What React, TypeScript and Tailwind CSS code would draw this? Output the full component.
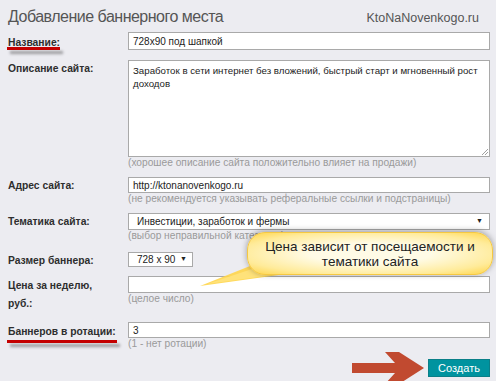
import React from "react";

const font = { fontFamily: '"Liberation Sans", Arial, sans-serif' };

function Label({ children, className = "" }: { children: React.ReactNode; className?: string }) {
  return (
    <div className={"relative w-[120px] shrink-0 text-[10.3px] font-bold text-[#2e2e2e] leading-[18px] " + className}>
      {children}
    </div>
  );
}

function Helper({ children, className = "" }: { children: React.ReactNode; className?: string }) {
  return <div className={"text-[10.2px] leading-[12px] text-[#9a9a9a] whitespace-nowrap " + className}>{children}</div>;
}

function Box({ children, h, className = "" }: { children?: React.ReactNode; h: string; className?: string }) {
  return (
    <div className={"w-full bg-white border border-[#a9a9a9] px-[4px] text-[10px] text-[#222] flex items-center " + h + " " + className}>
      {children}
    </div>
  );
}

function Underline({ className }: { className: string }) {
  return (
    <span
      className={
        "absolute left-[-1px] h-[3px] bg-[#c40000] shadow-[3px_4px_3px_rgba(0,0,0,0.35)] " + className
      }
    />
  );
}

export default function App() {
  return (
    <div className="relative w-[496px] h-[381px] overflow-hidden bg-[#ececf1]" style={font}>
      <div className="flex flex-col pl-[8px] pr-[6px]">
        {/* header */}
        <div className="h-[32px] flex items-start justify-between pt-[6px]">
          <div className="text-[16px] tracking-[-0.5px] text-[#555] leading-[22px]">Добавление баннерного места</div>
          <div className="text-[12.5px] text-[#555] leading-[16px] pt-[4px] pr-[11px]">KtoNaNovenkogo.ru</div>
        </div>

        {/* Название */}
        <div className="flex">
          <Label className="pt-[2px]">
            Название:
            <Underline className="top-[15px] w-[53px]" />
          </Label>
          <div className="flex-1">
            <Box h="h-[18px]">728x90 под шапкой</Box>
          </div>
        </div>

        {/* Описание */}
        <div className="flex mt-[8px]">
          <Label>Описание сайта:</Label>
          <div className="flex-1">
            <div className="relative w-full h-[97px] bg-white border border-[#a9a9a9] pl-[4px] pr-[2px] pt-[3px] text-[9.7px] leading-[13px] text-[#222]">
              Заработок в сети интернет без вложений, быстрый старт и мгновенный рост доходов
              <svg className="absolute right-[1px] bottom-[1px]" width="8" height="8" viewBox="0 0 8 8">
                <line x1="2" y1="8" x2="8" y2="2" stroke="#888" strokeWidth="0.8" />
                <line x1="5" y1="8" x2="8" y2="5" stroke="#888" strokeWidth="0.8" />
              </svg>
            </div>
            <Helper>(хорошее описание сайта положительно влияет на продажи)</Helper>
          </div>
        </div>

        {/* Адрес */}
        <div className="flex mt-[8px]">
          <Label>Адрес сайта:</Label>
          <div className="flex-1">
            <Box h="h-[16px]">http://ktonanovenkogo.ru</Box>
            <Helper>(не рекомендуется указывать реферальные ссылки и подстраницы)</Helper>
          </div>
        </div>

        {/* Тематика */}
        <div className="flex mt-[8px]">
          <Label>Тематика сайта:</Label>
          <div className="flex-1">
            <Box h="h-[17px]" className="justify-between pl-[8px] pr-[6px]">
              <span>Инвестиции, заработок и фермы</span>
              <span className="text-[7px]">▼</span>
            </Box>
            <Helper>(выбор неправильной категории)</Helper>
          </div>
        </div>

        {/* Размер */}
        <div className="flex mt-[10px]">
          <Label>Размер баннера:</Label>
          <div className="flex-1">
            <Box h="h-[15px]" className="!w-[65px] justify-between pl-[8px] pr-[5px]">
              <span>728 x 90</span>
              <span className="text-[7px]">▼</span>
            </Box>
          </div>
        </div>

        {/* Цена */}
        <div className="flex mt-[6px]">
          <Label className="pt-[1px]">
            Цена за неделю,
            <br />
            руб.:
          </Label>
          <div className="flex-1">
            <Box h="h-[17px]" />
            <Helper>(целое число)</Helper>
          </div>
        </div>

        {/* Ротация */}
        <div className="flex mt-[9px]">
          <Label className="pt-[1px]">
            Баннеров в ротации:
            <Underline className="top-[18px] w-[110px]" />
          </Label>
          <div className="flex-1">
            <Box h="h-[16px]">3</Box>
            <Helper>(1 - нет ротации)</Helper>
          </div>
        </div>

        {/* Кнопка */}
        <div className="flex justify-end mt-[9px]">
          <div className="w-[62px] h-[18px] bg-[#00939f] border border-[#0a7f88] text-white text-[11px] flex items-center justify-center">
            Создать
          </div>
        </div>
      </div>

      {/* callout */}
      <svg className="absolute left-[195px] top-[262px]" width="110" height="30" viewBox="0 0 110 30">
        <polygon points="55,4 105,10 5,24" fill="#ffd54a" opacity="0.9" />
        <polygon points="60,6 100,10 12,22" fill="#ffe27a" />
      </svg>
      <div className="absolute left-[247px] top-[232px] w-[246px] h-[43px] rounded-[18px] border border-[#f5c842] bg-[radial-gradient(ellipse_at_center,#fffbe6_35%,#ffeb9a_75%,#ffd54a_100%)] shadow-[0_-1px_6px_rgba(0,0,0,0.35)] flex flex-col items-center justify-center text-[13.5px] leading-[15px] text-[#222]">
        <div>Цена зависит от посещаемости и</div>
        <div>тематики сайта</div>
      </div>

      {/* arrow */}
      <svg className="absolute left-[350px] top-[350px]" width="78" height="40" viewBox="350 350 78 40">
        <polygon
          points="352,363 395,363 385,352 399,352 424,368 399,384 385,384 395,373 352,373"
          fill="#c14a30"
        />
      </svg>
    </div>
  );
}
